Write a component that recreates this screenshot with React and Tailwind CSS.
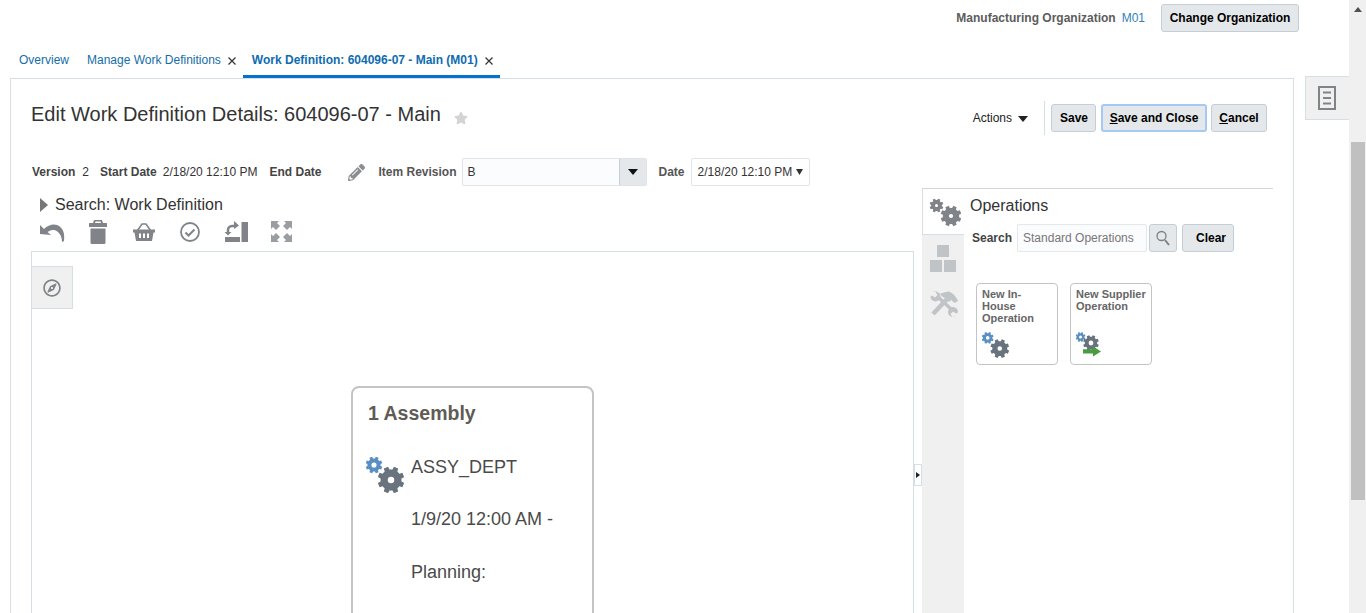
import React from "react";
import { FaRegCompass, FaPencilAlt, FaStar } from "react-icons/fa";

const gearPath = (cx, cy, r, hole, n = 8) => {
  const root = r * 0.78;
  const pts = [];
  const step = (Math.PI * 2) / n;
  for (let i = 0; i < n; i++) {
    const a = i * step + step / 2;
    const w = step * 0.22;
    const rootW = step * 0.32;
    [[root, a - rootW], [r, a - w], [r, a + w], [root, a + rootW]].forEach(([rr, t]) => {
      pts.push(`${(cx + rr * Math.cos(t)).toFixed(2)} ${(cy + rr * Math.sin(t)).toFixed(2)}`);
    });
  }
  const h = r * hole;
  return `M${pts.join("L")}Z M${cx - h} ${cy}a${h} ${h} 0 1 0 ${2 * h} 0a${h} ${h} 0 1 0 ${-2 * h} 0Z`;
};

const Gear = ({ cx, cy, r, color, hole = 0.26 }) => <path d={gearPath(cx, cy, r, hole)} fill={color} fillRule="evenodd" />;

const Btn = ({ children, className = "", border = "border border-[#c4ced7]" }) => (
  <button className={`h-[28px] rounded-[3px] ${border} bg-[#e4e8ea] text-[12px] font-bold text-[#000] ${className}`}>{children}</button>
);

const TwoGears = ({ className }) => (
  <svg viewBox="0 0 38 36" className={className}>
    <Gear cx={8} cy={8} r={8.5} color="#5a8fc4" hole={0.3} />
    <Gear cx={25} cy={23} r={13.5} color="#69737d" hole={0.24} />
  </svg>
);

const SupplierIcon = ({ className }) => (
  <svg viewBox="0 0 27 26" className={className}>
    <Gear cx={4.5} cy={5} r={5} color="#5a8fc4" hole={0.3} />
    <Gear cx={15} cy={11} r={8} color="#69737d" hole={0.3} />
    <path d="M7 17.2h10v-3l8 5.2-8 5.2v-3H7z" fill="#4b9b43" />
  </svg>
);

function CloseX() {
  return (
    <svg width="8" height="8" viewBox="0 0 8 8" stroke="#333" strokeWidth="1.2">
      <path d="M0.5 0.5l7 7M7.5 0.5l-7 7" />
    </svg>
  );
}

export default function App() {
  return (
    <div className="flex h-[613px] w-[1366px] overflow-hidden bg-white font-['Liberation_Sans',Arial,sans-serif] text-[12px] text-[#333]">
      <div className="flex w-[1349px] min-w-0 flex-col">
        {/* header */}
        <div className="flex h-[46px] shrink-0 items-start justify-end pr-[50px] pt-[4px]">
          <div className="flex h-[28px] items-center">
            <span className="font-bold text-[#5c5c5c]">Manufacturing Organization</span>
            <span className="ml-[6px] text-[#2f7fb8]">M01</span>
            <Btn className="ml-[16px] w-[138px]">Change Organization</Btn>
          </div>
        </div>
        {/* tabs */}
        <div className="flex h-[32px] shrink-0 items-stretch pl-[19px]">
          <a className="mt-[6px] leading-[16px] text-[#146ea8]">Overview</a>
          <a className="ml-[18px] mt-[6px] leading-[16px] text-[#146ea8]">Manage Work Definitions</a>
          <span className="ml-[7px] mt-[11px]"><CloseX /></span>
          <div className="ml-[7px] flex w-[257px] border-b-[3px] border-[#0572ce] pl-[9px]">
            <span className="mt-[6px] font-bold leading-[16px] text-[#0f6cb0]">Work Definition: 604096-07 - Main (M01)</span>
            <span className="ml-[7px] mt-[11px]"><CloseX /></span>
          </div>
        </div>
        {/* body */}
        <div className="flex min-h-0 flex-1">
          <div className="ml-[10px] mb-[-20px] w-[1284px] shrink-0 border border-[#d6dfe6] pl-[20px]">
            {/* title row */}
            <div className="flex h-[56px] items-start">
              <h1 className="mt-[22px] text-[20px] leading-[26px] text-[#333]">Edit Work Definition Details: 604096-07 - Main</h1>
              <FaStar className="ml-[13px] mt-[32px] text-[14px] text-[#d4d4d4]" />
              <div className="ml-auto mr-[26px] mt-[22px] flex items-center">
                <span className="text-[#222]">Actions</span>
                <svg width="10" height="6" className="ml-[6px] mt-[2px]"><path d="M0 0h10L5 6z" fill="#222" /></svg>
                <div className="ml-[16px] mr-[6px] h-[34px] w-px bg-[#d6dfe6]" />
                <Btn className="w-[45px] pl-[1px]">Save</Btn>
                <Btn className="ml-[5px] w-[106px]" border="border-2 border-[#a6c8f5]"><u>S</u>ave and Close</Btn>
                <Btn className="ml-[4px] w-[56px]"><u>C</u>ancel</Btn>
              </div>
            </div>
            {/* info row */}
            <div className="mt-[23px] flex h-[28px] items-center pl-px">
              <b className="text-[#444]">Version</b>
              <span className="ml-[7px]">2</span>
              <b className="ml-[11px] text-[#444]">Start Date</b>
              <span className="ml-[6px]">2/18/20 12:10 PM</span>
              <b className="ml-[12px] text-[#444]">End Date</b>
              <FaPencilAlt className="ml-[27px] text-[17px] text-[#8a8e91]" />
              <b className="ml-[13px] text-[#555]">Item Revision</b>
              <div className="ml-[5px] flex h-[28px] w-[185px] items-stretch rounded-[2px] border border-[#dfe4e8] bg-[#fbfcfe]">
                <span className="flex-1 self-center pl-[5px]">B</span>
                <span className="flex w-[27px] items-center justify-center border-l border-[#c4ced7] bg-[#e4e8ea]">
                  <svg width="10" height="6"><path d="M0 0h10L5 6z" fill="#111" /></svg>
                </span>
              </div>
              <b className="ml-[12px] text-[#555]">Date</b>
              <div className="ml-[6px] flex h-[28px] w-[119px] items-center rounded-[2px] border border-[#dfe4e8] pl-[6px]">
                2/18/20 12:10 PM
                <svg width="7" height="6" className="ml-[4px]"><path d="M0 0h7L3.5 6z" fill="#333" /></svg>
              </div>
            </div>
            {/* lower */}
            <div className="flex">
              {/* left */}
              <div className="w-[883px] shrink-0">
                <div className="flex h-[32px] items-center pl-[9px] pt-[6px]">
                  <svg width="8" height="14"><path d="M0 0l8 7-8 7z" fill="#777" /></svg>
                  <span className="ml-[7px] text-[16px] text-[#333]">Search: Work Definition</span>
                </div>
                <div className="flex h-[27px] items-center">
                  <svg width="25" height="23" viewBox="0 0 25 23" fill="#808488" className="ml-[9px]">
                    <path d="M0 14V5l4 4C8 5 13 3.500 17 5c6 2.500 8 8 7 16l-2 1c0-6-3-11-8-12-3-.5-5 1-6.500 2l3.500 3z" />
                  </svg>
                  <svg width="18" height="24" viewBox="0 0 18 24" fill="#808488" className="ml-[24px]">
                    <path fillRule="evenodd" d="M5 0h8l1 3h3.500a.5.5 0 0 1 .5.5V7H0V3.500A.5.5 0 0 1 .5 3H4zM6.500 1.500 6 3h6l-.5-1.500z" />
                    <path d="M1.500 8.500h15V22.500a1.500 1.500 0 0 1-1.500 1.500H3a1.500 1.500 0 0 1-1.500-1.500z" />
                  </svg>
                  <svg width="22" height="18" viewBox="0 0 22 18" className="ml-[26px]">
                    <path d="M4.500 7.500 9 1h4l4.500 6.500" fill="none" stroke="#808488" strokeWidth="1.600" />
                    <path d="M0 6.500h22v3H20.500L19 18H3L1.500 9.500H0z" fill="#808488" />
                    <path d="M6 10.500h2v4.500H6zM10 10.500h2v4.500h-2zM14 10.500h2v4.500h-2z" fill="#fff" />
                  </svg>
                  <svg width="20" height="20" viewBox="0 0 20 20" fill="none" stroke="#808488" className="ml-[25px]">
                    <circle cx="10" cy="10" r="9" strokeWidth="1.800" />
                    <path d="M5.500 10.500l3 3 6-6" strokeWidth="2" />
                  </svg>
                  <svg width="24" height="22" viewBox="0 0 24 22" fill="#808488" className="ml-[24px]">
                    <path d="M17.500 1H24v20h-6.500zM1 16h15v5H1z" />
                    <path d="M4 11.500V9a4 4 0 0 1 4-4h3" fill="none" stroke="#808488" strokeWidth="2.500" />
                    <path d="M10 0l5 4.500L10 8zM0.500 11h7L4 14.500z" />
                  </svg>
                  <svg width="21" height="21" viewBox="0 0 21 21" fill="#9a9ea2" className="ml-[23px]">
                    <path d="M0 0h8L6 2l3 3-4 4-3-3-2 2zM21 0v8l-2-2-3 3-4-4 3-3-2-2zM0 21v-8l2 2 3-3 4 4-3 3 2 2zM21 21h-8l2-2-3-3 4-4 3 3 2-2z" />
                  </svg>
                </div>
                <div className="relative mt-[6px] h-[400px] border-l border-r border-t border-[#d6dfe6] pl-[319px] pt-[134px]">
                  <div className="absolute left-0 top-[14px] flex h-[43px] w-[41px] items-center justify-center border-b border-r border-t border-[#d6dfe6] bg-[#f0f0f0] text-[#808488]">
                    <FaRegCompass className="text-[18px]" />
                  </div>
                  <div className="h-[300px] w-[243px] rounded-[8px] border-2 border-[#c4c4c4] pl-[15px]">
                    <div className="mt-[13px] text-[19.5px] font-bold leading-[24px] text-[#5f5b55]">1 Assembly</div>
                    <div className="mt-[31px] flex">
                      <TwoGears className="ml-[-2px] mt-[1px] h-[36px] w-[38px] shrink-0" />
                      <div className="ml-[7px] mt-[-2px] text-[18px] text-[#4a4a4a]">
                        <div className="h-[52px] leading-[26px]">ASSY_DEPT</div>
                        <div className="h-[53px] leading-[26px]">1/9/20 12:00 AM -</div>
                        <div className="h-[52px] leading-[26px]">Planning:</div>
                      </div>
                    </div>
                  </div>
                  <div className="absolute right-[-9px] top-[212px] flex h-[22px] w-[8px] items-center justify-center border border-[#d6dfe6] bg-white">
                    <svg width="4" height="6"><path d="M0 0l4 3-4 3z" fill="#222" /></svg>
                  </div>
                </div>
              </div>
              {/* right */}
              <div className="ml-[8px] mt-[2px] flex h-[430px] w-[351px] shrink-0 border-t border-[#d6d6d6]">
                <div className="flex w-[42px] shrink-0 flex-col items-center bg-[#f0f0f0]">
                  <div className="flex h-[46px] w-full items-center justify-center border-b border-l border-[#d6dfe6] bg-white pl-[2px]">
                    <svg viewBox="0 0 32 30" className="h-[30px] w-[32px]">
                      <Gear cx={7.500} cy={8.500} r={7} color="#808488" hole={0.22} />
                      <Gear cx={22} cy={19} r={10.500} color="#808488" hole={0.2} />
                    </svg>
                  </div>
                  <svg width="26" height="27" viewBox="0 0 26 27" fill="#c0c4c7" className="mt-[10px]">
                    <path d="M7 0h12v12H7zM0 15h12v12H0zM14 15h12v12H14z" />
                  </svg>
                  <svg width="28" height="26" viewBox="0 0 28 26" className="ml-[2px] mt-[19px]">
                    <path d="M7 5l15 14" stroke="#c0c4c7" strokeWidth="3.500" />
                    <circle cx="5.500" cy="5.500" r="5" fill="#c0c4c7" />
                    <path d="M0 1l5.500 0 2 3-2.500 2.500-3-2L0 6z" fill="#f0f0f0" />
                    <circle cx="23" cy="21" r="5" fill="#c0c4c7" />
                    <path d="M28 25l-5.500 1-2-3 2.500-2.500 3 2 2-1z" fill="#f0f0f0" />
                    <path d="M17 8L3 23" stroke="#c0c4c7" strokeWidth="4.500" />
                    <path d="M10 2.500L18 .5c4 .5 8 4.500 10 9.500l-3.500 2-3.500-3-2 2-4-4-3-1.500z" fill="#c0c4c7" />
                  </svg>
                </div>
                <div className="flex-1 pl-[6px]">
                  <div className="mt-[7px] text-[16px] leading-[20px] text-[#333]">Operations</div>
                  <div className="mt-[8px] flex h-[28px] items-center pl-[2px]">
                    <b className="text-[#444]">Search</b>
                    <div className="ml-[5px] flex h-[28px] w-[130px] items-center rounded-[2px] border border-[#e4e8ea] bg-[#fbfcfe] pl-[5px] text-[#777]">Standard Operations</div>
                    <Btn className="ml-[2px] flex w-[28px] items-center justify-center">
                      <svg width="16" height="16" viewBox="0 0 16 16" fill="none" stroke="#7d8185">
                        <circle cx="6.500" cy="6" r="4.500" strokeWidth="1.300" />
                        <path d="M10 10l4 5" strokeWidth="2" />
                      </svg>
                    </Btn>
                    <Btn className="ml-[5px] w-[52px] pl-[6px]">Clear</Btn>
                  </div>
                  <div className="ml-[6px] mt-[31px] flex gap-[12px]">
                    <div className="h-[82px] w-[82px] rounded-[4px] border border-[#c4c4c4] px-[5px] pt-[4px] text-[11px] font-bold leading-[12px] text-[#666]">
                      <div className="h-[36px]">New In-<br />House<br />Operation</div>
                      <TwoGears className="mt-[8px] h-[26px] w-[27px]" />
                    </div>
                    <div className="h-[82px] w-[82px] rounded-[4px] border border-[#c4c4c4] px-[5px] pt-[4px] text-[11px] font-bold leading-[12px] text-[#666]">
                      <div className="h-[36px] whitespace-nowrap">New Supplier<br />Operation</div>
                      <SupplierIcon className="mt-[8px] h-[26px] w-[27px]" />
                    </div>
                  </div>
                </div>
              </div>
            </div>
          </div>
          {/* side tab */}
          <div className="ml-[11px] mt-[-2px] flex h-[44px] flex-1 items-center justify-center self-start border-b border-l border-t border-[#d6dfe6] bg-[#f0f0f0] pr-[1px]">
            <svg width="18" height="24" viewBox="0 0 18 24" fill="none" stroke="#808488">
              <rect x="1" y="1" width="16" height="22" strokeWidth="2" />
              <path d="M5 6.500h8M5 12h8M5 17.500h8" strokeWidth="2" />
            </svg>
          </div>
        </div>
      </div>
      {/* scrollbar */}
      <div className="flex w-[17px] shrink-0 flex-col items-center bg-[#f0f0f0]">
        <svg width="8" height="5" className="mt-[7px]"><path d="M4 0l4 5H0z" fill="#505050" /></svg>
        <div className="mt-[130px] h-[358px] w-[14px] bg-[#c0c0c0]" />
      </div>
    </div>
  );
}
